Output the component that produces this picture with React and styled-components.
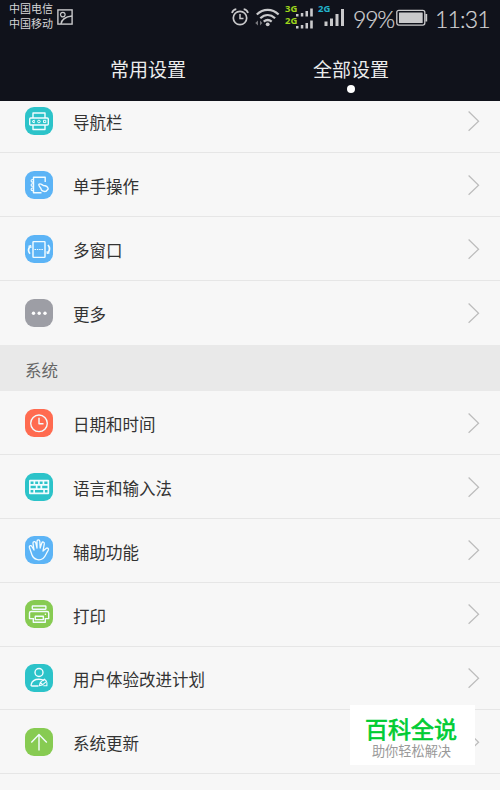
import React from 'react';
import styled, { createGlobalStyle } from 'styled-components';

const GlobalStyle = createGlobalStyle`
  * {
    box-sizing: border-box;
  }

  body {
    margin: 0;
    background: #f7f7f7;
    font-family: "Noto Sans CJK SC", sans-serif;
  }
`;

const Screen = styled.div`
  position: relative;
  width: 500px;
  height: 790px;
  overflow: hidden;
  display: flex;
  flex-direction: column;
  background: #f7f7f7;
`;

const Header = styled.header`
  flex: none;
  height: 101px;
  background: #10121b;
  color: #e6e6e6;
`;

const StatusBar = styled.div`
  display: flex;
  align-items: flex-start;
  height: 36px;
  color: #c9c9cb;
`;

const Carriers = styled.div`
  width: 48px;
  margin-left: 9px;
  padding-top: 1px;
  font-size: 11px;
  line-height: 15px;
  white-space: nowrap;
  color: #d6d6d8;
`;

const StatusIcon = styled.svg`
  flex: none;
  display: block;
  margin-left: ${props => props.$left || 0}px;
  margin-top: ${props => props.$top || 0}px;
`;

const DualSignal = styled.div`
  width: 28px;
  margin: 3px 0 0 4px;
`;

const SignalLine = styled.div`
  display: flex;
  height: 12px;
`;

const SingleSignal = styled.div`
  display: flex;
  width: 28px;
  margin: 3px 0 0 5px;
`;

const NetworkType = styled.span`
  width: ${props => props.$width}px;
  font-family: "Open Sans", sans-serif;
  font-size: 9.5px;
  font-weight: 700;
  line-height: 12px;
  color: ${props => props.$color};
`;

const StatusText = styled.div`
  width: ${props => props.$width}px;
  margin-left: ${props => props.$left}px;
  padding-top: 5px;
  font-family: Lato, sans-serif;
  font-size: 23px;
  font-weight: 300;
  line-height: 28px;
  letter-spacing: ${props => props.$spacing || 0}px;
  white-space: nowrap;
  color: #d4d4d6;
  -webkit-text-stroke: 0.2px #d4d4d6;
`;

const Tabs = styled.nav`
  display: grid;
  grid-template-columns: 203px 203px;
  justify-content: center;
`;

const Tab = styled.div`
  display: flex;
  flex-direction: column;
  align-items: center;
  padding: 19px 1px 0 0;
  font-size: 19px;
  line-height: 28px;
  color: #ececec;
`;

const TabDot = styled.span`
  width: 8px;
  height: 8px;
  margin-top: 2px;
  border-radius: 50%;
  background: #fff;
`;

const List = styled.main`
  flex: 1;
  overflow: hidden;
`;

const Group = styled.div`
  margin-top: ${props => props.$scrolled ? -12 : 0}px;
`;

const Row = styled.div`
  display: flex;
  align-items: center;
  height: ${props => props.$height}px;
  padding: 0 20px 0 25px;
  border-bottom: 1px solid ${props => props.$last ? 'transparent' : '#e6e6e6'};
`;

const IconTile = styled.div`
  flex: none;
  width: 28px;
  height: 28px;
  border-radius: 9px;
  background: ${props => props.$color};

  svg {
    display: block;
  }
`;

const Label = styled.div`
  padding-top: 3px;
  margin: 0 auto 0 20px;
  font-size: 16.5px;
  line-height: 24px;
  color: #333;
`;

const SectionTitle = styled.div`
  height: 46.4px;
  padding: 2px 25px 0;
  font-size: 16.5px;
  line-height: 46px;
  color: #666;
  background: #e9e9e9;
`;

const Watermark = styled.aside`
  position: absolute;
  left: 350px;
  top: 705px;
  width: 125px;
  height: 60px;
  padding-top: 8px;
  background: #fff;
  text-align: center;
  white-space: nowrap;
`;

const WatermarkTitle = styled.div`
  padding-right: 3px;
  font-size: 23px;
  line-height: 31px;
  color: #00cc33;
  -webkit-text-stroke: 0.7px #00cc33;
`;

const WatermarkText = styled.div`
  padding-right: 2px;
  font-size: 13.2px;
  line-height: 14px;
  color: #999;
`;

const TEAL = '#2cc3c9';
const BLUE = '#5cb4f6';
const GREEN = '#87cb52';

const glyphs = {
  navbar: (
    <>
      <path d="M8 11V6h12v5M8 18v4.500h12V18" />
      <rect x="4.700" y="11" width="18.600" height="7" rx="1" />
      <path d="M9.200 13v3l-2.200-1.500zM18.500 13.300h2.300v2.300h-2.300z" strokeWidth="1" />
      <circle cx="13.900" cy="14.500" r="1.300" strokeWidth="1" />
    </>
  ),
  onehand: (
    <>
      <path d="M20.200 11V6.200H8.500v15.500h8" />
      <path d="M9 8.500H7.400a1.300 1.300 0 0 0 0 2.600H9M9 12.700H7.400a1.300 1.300 0 0 0 0 2.600H9M9 17H7.400a1.300 1.300 0 0 0 0 2.600H9" strokeWidth="1.100" />
      <path d="M14 13.300c1.200-1.200 2.600.2 4.200 1.200 2.800 0 4.500 1 5 3.400l-2.400 2.500c-2.800.4-4.600-1-5-3.200-1.200-1.400-2.600-2.900-1.800-3.900z" />
    </>
  ),
  windows: (
    <>
      <rect x="8" y="6.600" width="12" height="15.800" rx=".6" />
      <path d="M9.500 14.500h9" strokeWidth="1.200" strokeDasharray="1.500 .8" />
      <path d="M5 18.800c-2-2.600-1.800-5.200 0-7.200M23 10c2 2.400 1.800 5.300 0 7.800" strokeWidth="1.700" />
      <path d="M3.500 11.300l2.300-.6.100 2.300M24.500 17.900l-2.300.5-.1-2.200" strokeWidth="1.200" />
    </>
  ),
  more: (
    <g fill="#fff" stroke="none">
      <circle cx="8.500" cy="14.300" r="1.700" />
      <circle cx="14.200" cy="14.300" r="1.700" />
      <circle cx="20" cy="14.300" r="1.700" />
    </g>
  ),
  clock: (
    <>
      <circle cx="14" cy="14.300" r="8.300" />
      <path d="M14 8.800v6h4.500" />
    </>
  ),
  keyboard: (
    <>
      <rect x="4" y="6.800" width="20.200" height="14.400" rx="1" fill="#f2fcff" stroke="none" />
      <path d="M5.600 9.800h2.900M10.200 9.800h2.900M14.700 9.800h2.900M19.300 9.800h3.200M5.600 14h5.200M12.500 14h2.900M17.200 14h5.300M5.600 18.200h2.700M10 18.200h8.200M19.900 18.200h2.600" stroke={TEAL} strokeWidth="2.400" />
    </>
  ),
  hand: (
    <path d="M7 19L4.400 11.500c-.5-1.800 1.700-2.600 2.500-1L9 14 8 7.300c-.2-1.900 2.300-2.300 2.800-.5L12 12V5.300c0-1.900 2.700-1.900 2.800 0l.4 6.700 1.600-5c.6-1.700 2.900-1 2.500.8L18 15l3-2.600c1.400-1.100 3.300.4 2.200 1.900-1.800 2.400-2.600 6.500-5.200 8.200-3.800 2.500-9.400 1.200-11-3.500z" strokeWidth="1.300" />
  ),
  printer: (
    <>
      <rect x="7.300" y="6" width="13.600" height="3.200" rx=".6" />
      <path d="M8.500 18.600H4.500v-5.500c0-1 .6-1.600 1.600-1.600h16c1 0 1.600.6 1.600 1.600v5.500H20" />
      <path d="M8.300 18v4.300h12V18" />
      <rect x="10.300" y="16.200" width="8" height="3.400" />
      <circle cx="20.400" cy="14.300" r=".8" fill="#fff" stroke="none" />
    </>
  ),
  user: (
    <>
      <circle cx="14" cy="8.500" r="4" />
      <path d="M13.500 22H7.200c-1 0-1.300-.5-1-1.600.8-3.600 3.600-5.200 7.600-5.200 2.300 0 4 .4 5.500 1.400" />
      <path d="M14.300 21.700l1-3.300 4.100-3.300 2.200 2.300-4.200 3.500zM15.500 18.300l2.100 2.300M18.300 21.800h3.600v-3.500" strokeWidth="1.100" />
    </>
  ),
  update: <path d="M14 22.500V6.700M6.300 14.500L14 6.600l7.800 7.900" />,
};

const displayItems = [
  { label: '导航栏', icon: 'navbar', color: TEAL },
  { label: '单手操作', icon: 'onehand', color: BLUE },
  { label: '多窗口', icon: 'windows', color: BLUE },
  { label: '更多', icon: 'more', color: '#9d9ea5' },
];

const systemItems = [
  { label: '日期和时间', icon: 'clock', color: '#ff6b50' },
  { label: '语言和输入法', icon: 'keyboard', color: TEAL },
  { label: '辅助功能', icon: 'hand', color: BLUE },
  { label: '打印', icon: 'printer', color: GREEN },
  { label: '用户体验改进计划', icon: 'user', color: TEAL },
  { label: '系统更新', icon: 'update', color: GREEN },
];

const Chevron = () => (
  <svg width="12" height="22" viewBox="0 0 12 22" fill="none" stroke="#bcbcbc" strokeWidth="1.200">
    <path d="M.6 1.500l10 9.700-10 9.500" />
  </svg>
);

const SettingRow = ({ item, height, last }) => (
  <Row $height={height} $last={last}>
    <IconTile $color={item.color}>
      <svg width="28" height="28" viewBox="0 0 28 28" fill="none" stroke="#f2fcff" strokeWidth="1.400" strokeLinejoin="round">
        {glyphs[item.icon]}
      </svg>
    </IconTile>
    <Label>{item.label}</Label>
    <Chevron />
  </Row>
);

const SmallBars = () => (
  <StatusIcon width="18" height="9" viewBox="0 0 18 9" $top={5} fill="currentColor">
    <path d="M0 6h2.500v2.500H0zM4.800 5h2.500v3.500H4.800zM9.500 3H12v5.500H9.500zM14.200.5h2.600v8h-2.600z" />
  </StatusIcon>
);

const Status = () => (
  <StatusBar>
    <Carriers>
      <div>中国电信</div>
      <div>中国移动</div>
    </Carriers>
    <StatusIcon width="16" height="16" viewBox="0 0 16 16" $top={9} fill="none" stroke="currentColor" strokeWidth="1.400">
      <rect x=".9" y=".9" width="14.200" height="14.200" />
      <circle cx="5.800" cy="5.600" r="2.300" strokeWidth="1.200" />
      <path d="M4 15c.6-4.500 4-7.200 11-8" />
    </StatusIcon>
    {/* alarm */}
    <StatusIcon width="18" height="19" viewBox="0 0 18 19" $left={158} $top={8} fill="none" stroke="currentColor">
      <circle cx="9" cy="10" r="6.700" strokeWidth="1.700" />
      <path d="M9 6v4.500h3.500" strokeWidth="1.500" />
      <path d="M1 5C1.500 3 3 1.500 5.300 1.100M17 5c-.5-2-2-3.500-4.300-3.900" strokeWidth="1.700" />
    </StatusIcon>
    {/* wifi */}
    <StatusIcon width="26" height="20" viewBox="0 0 26 20" $left={6} $top={7} fill="none" stroke="currentColor" strokeWidth="2.200">
      <path d="M1.800 7.500c6.400-6.200 15.400-6.200 21.800 0M5.300 11.200c4.600-4.200 10.200-4.200 14.800 0M8.700 14.700c2.600-2.200 5.400-2.200 8 0" />
      <circle cx="12.700" cy="17.300" r="1.900" fill="currentColor" stroke="none" />
      <path d="M3 13.500v5L.2 16zM5 13.500v5L7.300 16z" fill="#77777c" stroke="none" />
    </StatusIcon>
    <DualSignal>
      <SignalLine>
        <NetworkType $color="#9ed51c" $width={11}>3G</NetworkType>
        <SmallBars />
      </SignalLine>
      <SignalLine>
        <NetworkType $color="#9ed51c" $width={11}>2G</NetworkType>
        <SmallBars />
      </SignalLine>
    </DualSignal>
    <SingleSignal>
      <NetworkType $color="#22b4cc" $width={6}>2G</NetworkType>
      <StatusIcon width="21" height="18" viewBox="0 0 21 18" $top={5} fill="currentColor">
        <path d="M.5 13.500h3V18h-3zM6 10.500h3V18H6zM11.500 6h3v12h-3zM17 1h3v17h-3z" />
      </StatusIcon>
    </SingleSignal>
    <StatusText $width={41} $left={7} $spacing={-1.200}>99%</StatusText>
    <StatusIcon width="32" height="18" viewBox="0 0 32 18" $left={2} $top={9} fill="none" stroke="currentColor">
      <rect x=".8" y="1.300" width="28" height="14.800" rx="2" strokeWidth="1.300" />
      <rect x="3" y="3.500" width="23.700" height="10.400" rx=".5" fill="currentColor" stroke="none" />
      <path d="M30.300 5v7.500" strokeWidth="1.800" />
    </StatusIcon>
    <StatusText $width={60} $left={7} $spacing={-0.800}>11:31</StatusText>
  </StatusBar>
);

const App = () => (
  <>
    <GlobalStyle />
    <Screen>
      <Header>
        <Status />
        <Tabs>
          <Tab>常用设置</Tab>
          <Tab>
            全部设置
            <TabDot />
          </Tab>
        </Tabs>
      </Header>
      <List>
        <Group $scrolled>
          {displayItems.map((item, idx) => (
            <SettingRow
              key={item.label}
              item={item}
              height={64}
              last={idx === displayItems.length - 1}
            />
          ))}
        </Group>
        <SectionTitle>系统</SectionTitle>
        <Group>
          {systemItems.map(item => (
            <SettingRow key={item.label} item={item} height={63.8} />
          ))}
        </Group>
      </List>
      <Watermark>
        <WatermarkTitle>百科全说</WatermarkTitle>
        <WatermarkText>助你轻松解决</WatermarkText>
      </Watermark>
    </Screen>
  </>
);

export default App;
